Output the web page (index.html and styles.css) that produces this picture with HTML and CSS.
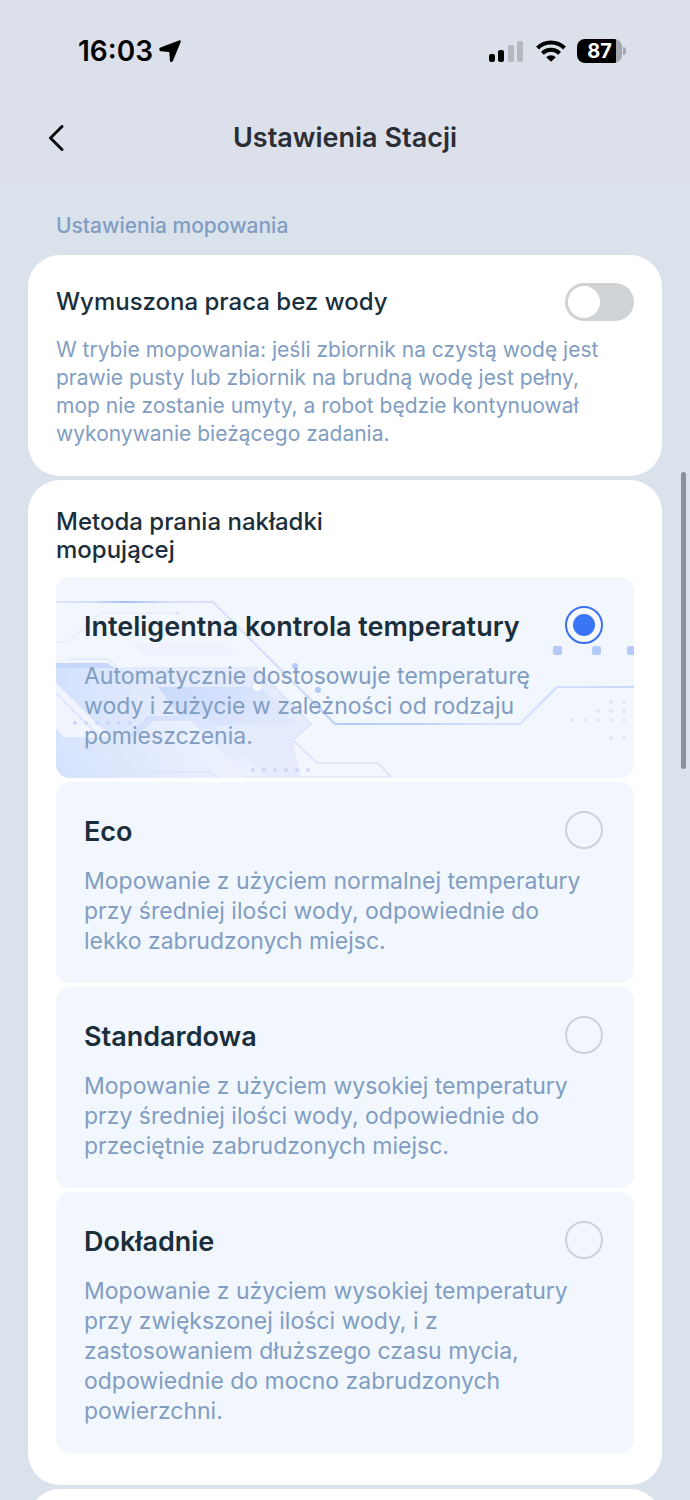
FILE: index.html
```html
<!DOCTYPE html>
<html lang="pl">
<head>
    <meta charset="UTF-8">
    <meta name="viewport" content="width=device-width, initial-scale=1.0">
    <title>Ustawienia Stacji</title>
    <link rel="stylesheet" href="styles.css">
</head>
<body>
    <div class="screen">
        <div class="status-bar">
            <div class="status-left">
                <span class="time">16:03</span>
                <svg class="location" viewBox="0 0 22 22" width="22" height="22">
                    <path d="M20 .5 1.500 7.500C-.3 8.200-.2 10.800 1.700 11.200L9.600 12c.5 0 .8.300.8.800l.5 7.600c.2 1.900 2.500 2 3.100.4L21.600 2.200C22 .9 21.200 0 20 .5z"/>
                </svg>
            </div>
            <div class="status-right">
                <svg viewBox="0 0 36 22" width="36" height="22">
                    <rect x="0" y="14" width="6" height="8" rx="2"/>
                    <rect x="9" y="10" width="6" height="12" rx="2"/>
                    <rect x="19" y="5" width="6" height="17" rx="2" fill="#b5b8c0"/>
                    <rect x="28" y="1" width="6" height="21" rx="2" fill="#b5b8c0"/>
                </svg>
                <svg viewBox="0 0 30 22" width="30" height="22" fill="none" stroke="#000" stroke-width="4">
                    <path d="M1.500 8a19.200 19.200 0 0 1 27 0"/>
                    <path d="M6.400 13.400a12.200 12.200 0 0 1 17.200 0"/>
                    <path d="M15 21.800 10.200 17.200a7 7 0 0 1 9.600 0z" fill="#000" stroke="none"/>
                </svg>
                <div class="battery"><span class="battery-level">87</span></div>
            </div>
        </div>

        <header class="top-bar">
            <button class="back" type="button" aria-label="Wstecz">
                <svg viewBox="0 0 16 26" width="16" height="26">
                    <path d="M14 1.500 2.500 13 14 24.500" fill="none" stroke="#0a0a0f" stroke-width="3" stroke-linecap="round" stroke-linejoin="round"/>
                </svg>
            </button>
            <h1>Ustawienia Stacji</h1>
        </header>

        <main>
            <h2 class="section-label">Ustawienia mopowania</h2>

            <section class="card">
                <div class="card-head">
                    <label class="card-title" for="dry-run">Wymuszona praca bez wody</label>
                    <input class="switch" type="checkbox" role="switch" id="dry-run">
                </div>
                <p class="card-text">W trybie mopowania: jeśli zbiornik na czystą wodę jest prawie pusty lub zbiornik na brudną wodę jest pełny, mop nie zostanie umyty, a robot będzie kontynuował wykonywanie bieżącego zadania.</p>
            </section>

            <section class="card card-options">
                <h3 class="card-title wrap">Metoda prania nakładki mopującej</h3>

                <div class="options">
                    <div class="option">
                        <svg class="circuit" viewBox="0 0 578 201" preserveAspectRatio="xMidYMid slice" fill="none">
                            <defs>
                                <linearGradient id="glow" gradientUnits="userSpaceOnUse" x1="0" y1="0" x2="578" y2="0">
                                    <stop offset="0" stop-color="#dfe5fb"/>
                                    <stop offset="0.06" stop-color="#d3defb"/>
                                    <stop offset="0.12" stop-color="#a3bff9"/>
                                    <stop offset="0.2" stop-color="#dbe0fb"/>
                                    <stop offset="0.42" stop-color="#d3dcfb"/>
                                    <stop offset="0.5" stop-color="#b4cafb"/>
                                    <stop offset="0.63" stop-color="#bdd1fb"/>
                                    <stop offset="0.75" stop-color="#dbe3fb"/>
                                    <stop offset="1" stop-color="#c9dafb"/>
                                </linearGradient>
                                <linearGradient id="band" x1="0" y1="0" x2="1" y2="0">
                                    <stop offset="0" stop-color="#d3e1fd"/>
                                    <stop offset="0.4" stop-color="#e3ebfd"/>
                                    <stop offset="1" stop-color="#e6ecfd"/>
                                </linearGradient>
                                <linearGradient id="core" x1="0" y1="0" x2="1" y2="0.4">
                                    <stop offset="0" stop-color="#c9dafc"/>
                                    <stop offset="1" stop-color="#e0e8fd"/>
                                </linearGradient>
                                <linearGradient id="corner" x1="0" y1="0.6" x2="1" y2="0.4">
                                    <stop offset="0" stop-color="#d6e3fd"/>
                                    <stop offset="1" stop-color="#f0f4fe"/>
                                </linearGradient>
                                <linearGradient id="rim" x1="0" y1="0" x2="1" y2="0.5">
                                    <stop offset="0" stop-color="#cfddfc"/>
                                    <stop offset="1" stop-color="#ebf0fe"/>
                                </linearGradient>
                            </defs>
                            <path d="M74 66h93l13 12H88z" fill="#eff2fd"/>
                            <path d="M0 86h51l11 6h139l54 55-18 16 8 38H0z" fill="url(#band)"/>
                            <path d="M0 86h51l7 5H0z" fill="#c6d7fc"/>
                            <path d="M102 110h103l38 38H130z" fill="url(#core)"/>
                            <path d="M72 160l20-21h56l64 62h-30z" fill="url(#rim)"/>
                            <path d="M0 106l54 54H8l-8-8z" fill="#f1f5fe"/>
                            <path d="M0 116l42 42" stroke="#dde6fc" stroke-width="2"/>
                            <path d="M0 152l8 8h71l18-16h39l53 57H0z" fill="url(#corner)"/>
                            <path d="M88 201l8-6h58l8 6" stroke="#dfe5fb" stroke-width="2"/>
                            <path d="M0 65h12l32-29h74" stroke="#ebeffc" stroke-width="2"/>
                            <path d="M14 82h38l10 9h139" stroke="#e5eafc" stroke-width="2"/>
                            <path d="M201 92l54 55-18 16 24 23h61l14 15" stroke="#e0e6fa" stroke-width="2"/>
                            <path d="M189 200h147" stroke="#e6eaf9" stroke-width="2"/>
                            <path d="M0 25h157l122 122h185l37-37h77" stroke="url(#glow)" stroke-width="2"/>
                            <circle cx="201" cy="110" r="4" fill="#fafcff"/>
                            <circle cx="239" cy="89" r="3" fill="#b9cbfa"/>
                            <circle cx="262" cy="113" r="3" fill="#b3cafb"/>
                            <circle cx="121" cy="36" r="2" fill="#dde4fb"/>
                            <g fill="#b3cafb">
                                <rect x="497" y="69" width="9" height="9" rx="2"/>
                                <rect x="536" y="69" width="9" height="9" rx="2"/>
                                <rect x="571" y="69" width="9" height="9" rx="2"/>
                            </g>
                            <g stroke="#cdd7f8" stroke-width="4" stroke-linecap="round">
                                <path d="M197 193h56" stroke-dasharray="0 11"/>
                                <path d="M19 146h56" stroke-dasharray="0 11"/>
                                <path d="M516 143h53M542 134h27M555 125h14M555 161h14" stroke="#e3e8f5" stroke-dasharray="0 13"/>
                            </g>
                        </svg>
                        <div class="option-head">
                            <label for="smart">Inteligentna kontrola temperatury</label>
                            <input type="radio" name="wash" id="smart" checked>
                        </div>
                        <p>Automatycznie dostosowuje temperaturę wody i zużycie w zależności od rodzaju pomieszczenia.</p>
                    </div>

                    <div class="option">
                        <div class="option-head">
                            <label for="eco">Eco</label>
                            <input type="radio" name="wash" id="eco">
                        </div>
                        <p>Mopowanie z użyciem normalnej temperatury przy średniej ilości wody, odpowiednie do lekko zabrudzonych miejsc.</p>
                    </div>

                    <div class="option">
                        <div class="option-head">
                            <label for="standard">Standardowa</label>
                            <input type="radio" name="wash" id="standard">
                        </div>
                        <p>Mopowanie z użyciem wysokiej temperatury przy średniej ilości wody, odpowiednie do przeciętnie zabrudzonych miejsc.</p>
                    </div>

                    <div class="option">
                        <div class="option-head">
                            <label for="deep">Dokładnie</label>
                            <input type="radio" name="wash" id="deep">
                        </div>
                        <p>Mopowanie z użyciem wysokiej temperatury przy zwiększonej ilości wody, i z zastosowaniem dłuższego czasu mycia, odpowiednie do mocno zabrudzonych powierzchni.</p>
                    </div>
                </div>
            </section>

            <section class="card"></section>
        </main>
        <div class="scroll-thumb"></div>
    </div>
</body>
</html>
```

FILE: styles.css
```css
* {
    box-sizing: border-box;
}
body {
    margin: 0;
    font-family: Inter, "Noto Sans", sans-serif;
    background: #dae2ec;
    color: #1a2e3b;
}
h1, h2, h3, p {
    margin: 0;
}
.screen {
    position: relative;
    height: 100vh;
    overflow: hidden;
    display: flex;
    flex-direction: column;
}

/* status bar */
.status-bar {
    display: flex;
    justify-content: space-between;
    align-items: center;
    height: 102px;
    flex-shrink: 0;
    padding: 0 68px 0 78px;
    background: #dbe0eb;
}
.status-left {
    display: flex;
    align-items: center;
    gap: 6px;
}
.time {
    font-size: 28px;
    font-weight: 600;
    color: #000;
}
.status-right {
    display: flex;
    align-items: center;
    gap: 11px;
}
.battery {
    position: relative;
    width: 45px;
    height: 24px;
    border-radius: 8px;
    background: linear-gradient(to right, #000 39px, #a3a6ad 39px);
    text-align: center;
}
.battery::after {
    content: "";
    position: absolute;
    right: -4px;
    top: 8px;
    width: 3px;
    height: 8px;
    border-radius: 0 3px 3px 0;
    background: #a3a6ad;
}
.battery-level {
    display: block;
    font-size: 20px;
    line-height: 24px;
    font-weight: 700;
    color: #fff;
}

/* title bar */
.top-bar {
    display: grid;
    grid-template-columns: 60px 1fr 60px;
    align-items: center;
    height: 82px;
    flex-shrink: 0;
    padding: 0 28px 10px;
    background: #dbe0eb;
}
.top-bar h1 {
    font-size: 27px;
    line-height: 34px;
    font-weight: 600;
    color: #2b2e35;
    text-align: center;
}
.back {
    display: flex;
    align-items: center;
    height: 44px;
    padding: 0 20px;
    border: none;
    background: none;
    cursor: pointer;
}

main {
    flex: 1;
    min-height: 0;
    overflow-y: auto;
    scrollbar-width: none;
    padding: 28px 28px 0;
}
.section-label {
    padding: 0 28px;
    margin-bottom: 15px;
    font-size: 21px;
    line-height: 28px;
    font-weight: 500;
    color: #819dc2;
}
.card {
    min-height: 80px;
    padding: 28px;
    margin-bottom: 4px;
    border-radius: 32px;
    background: #fff;
}
.card-head {
    display: flex;
    justify-content: space-between;
    align-items: center;
    margin-bottom: 15px;
}
.card-title {
    font-size: 24px;
    line-height: 28px;
    font-weight: 500;
}
.wrap {
    max-width: 300px;
    margin-bottom: 13px;
}
.card-text {
    padding-right: 16px;
    font-size: 21px;
    line-height: 28px;
    color: #819dc2;
}
.card-options {
    padding-bottom: 32px;
}

.switch {
    appearance: none;
    width: 69px;
    height: 38px;
    margin: 0;
    padding: 3px;
    border-radius: 19px;
    background: #d0d3d6;
    cursor: pointer;
}
.switch::before {
    content: "";
    display: block;
    width: 32px;
    height: 32px;
    border-radius: 50%;
    background: #fff;
}
.switch:checked {
    background: #3a75f5;
}
.switch:checked::before {
    margin-left: auto;
}

/* washing modes */
.options {
    display: flex;
    flex-direction: column;
    gap: 4px;
}
.option {
    position: relative;
    padding: 29px 28px 27px;
    border-radius: 14px;
    background: #f2f7fd;
    overflow: hidden;
}
.circuit {
    position: absolute;
    inset: 0;
    width: 100%;
    height: 100%;
}
.option-head {
    position: relative;
    display: flex;
    justify-content: space-between;
    align-items: flex-end;
    padding-right: 3px;
    margin-bottom: 17px;
}
.option-head label {
    font-size: 27px;
    line-height: 34px;
    font-weight: 600;
}
.option p {
    position: relative;
    padding-right: 16px;
    font-size: 23px;
    line-height: 30px;
    color: #819dc2;
}
input[type="radio"] {
    appearance: none;
    display: grid;
    place-items: center;
    width: 38px;
    height: 38px;
    margin: 0;
    border: 2px solid #cdd2d6;
    border-radius: 50%;
    cursor: pointer;
}
input[type="radio"]:checked {
    border: 2px solid #3a6ff0;
    background: #f6faff;
}
input[type="radio"]:checked::before {
    content: "";
    width: 22px;
    height: 22px;
    border-radius: 50%;
    background: #3a75f5;
}

.scroll-thumb {
    position: absolute;
    top: 472px;
    right: 4px;
    width: 5px;
    height: 297px;
    border-radius: 3px;
    background: #8c919c;
}
```
